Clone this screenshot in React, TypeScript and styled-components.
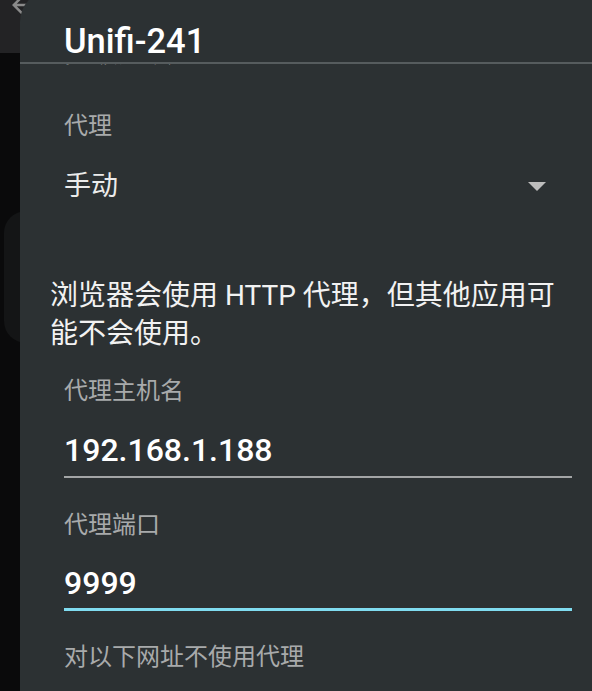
import React from "react";
import styled, { createGlobalStyle } from "styled-components";

const Global = createGlobalStyle`
  html, body {
    margin: 0;
    padding: 0;
    background: #0a0a0b;
    overflow: hidden;
  }
  * { box-sizing: border-box; }
`;

const FONT = `Roboto, "Noto Sans CJK SC", sans-serif`;

const Screen = styled.div`
  position: relative;
  width: 592px;
  height: 691px;
  overflow: hidden;
  background: #0a0a0b;
  font-family: ${FONT};
`;

const AppBar = styled.div`
  height: 53px;
  background: #232325;
  display: flex;
  align-items: flex-start;
  padding-left: 7px;
`;

const BackIcon = styled.svg`
  width: 30px;
  height: 30px;
  margin-top: -10px;
  fill: #8a8a8a;
`;

const ListArea = styled.div`
  padding: 158px 0 0 4px;
`;

const ListCard = styled.div`
  width: 200px;
  height: 132px;
  border-radius: 22px;
  background: #141516;
`;

const Dialog = styled.div`
  position: absolute;
  left: 20px;
  top: -10px;
  right: 0;
  bottom: 0;
  background: #2c3133;
  border-top-left-radius: 32px;
  display: flex;
  flex-direction: column;
`;

const Header = styled.div`
  height: 72px;
  flex-shrink: 0;
  display: flex;
  align-items: flex-end;
  padding: 0 0 1px 44px;
`;

const Title = styled.h1`
  margin: 0;
  font-size: 34.5px;
  line-height: 40px;
  font-weight: 500;
  color: #ffffff;
  letter-spacing: 0;
`;

const Divider = styled.div`
  height: 2px;
  flex-shrink: 0;
  background: #565c5e;
`;

const Body = styled.div`
  flex: 1;
  min-height: 0;
  overflow: hidden;
  padding: 0 20px 0 30px;
`;

const Scroller = styled.div`
  margin-top: -31px;
  display: flex;
  flex-direction: column;
`;

const CheckRow = styled.div`
  padding-left: 14px;
  font-size: 27px;
  line-height: 40px;
  color: #f2f2f2;
`;

const FieldLabel = styled.div<{ $top: number }>`
  margin-top: ${(p) => p.$top}px;
  padding-left: 14px;
  font-size: 24px;
  line-height: 32px;
  color: #a8aaab;
`;

const SelectRow = styled.div`
  margin-top: 16px;
  height: 56px;
  display: flex;
  align-items: center;
  justify-content: space-between;
  padding-left: 14px;
`;

const SelectValue = styled.span`
  font-size: 27px;
  line-height: 40px;
  color: #ebebeb;
`;

const Caret = styled.svg`
  width: 18px;
  height: 9px;
  margin-right: 26px;
  fill: #bdbdbd;
`;

const Note = styled.p`
  margin: 63px 0 0 0;
  font-size: 28px;
  line-height: 38px;
  color: #f2f2f2;
`;

const TextField = styled.div<{ $focused?: boolean }>`
  margin: ${(p) => (p.$focused ? 22 : 23)}px 0 0 14px;
  padding-bottom: ${(p) => (p.$focused ? 5 : 6)}px;
  border-bottom: ${(p) => (p.$focused ? "3px solid #80dcf0" : "2px solid #a3a5a6")};
  font-size: 32px;
  line-height: 40px;
  font-weight: 500;
  color: #ffffff;
`;

export default function App() {
  return (
    <>
      <Global />
      <Screen>
        <AppBar>
          <BackIcon viewBox="0 0 24 24">
            <path d="M20 11H7.83l5.59-5.59L12 4l-8 8 8 8 1.41-1.41L7.83 13H20v-2z" />
          </BackIcon>
        </AppBar>
        <ListArea>
          <ListCard />
        </ListArea>
        <Dialog>
          <Header>
            <Title>Unifi-241</Title>
          </Header>
          <Divider />
          <Body>
            <Scroller>
              <CheckRow>高级选项</CheckRow>
              <FieldLabel $top={37}>代理</FieldLabel>
              <SelectRow>
                <SelectValue>手动</SelectValue>
                <Caret viewBox="0 0 18 9">
                  <polygon points="0,0 18,0 9,9" />
                </Caret>
              </SelectRow>
              <Note>浏览器会使用 HTTP 代理，但其他应用可能不会使用。</Note>
              <FieldLabel $top={22}>代理主机名</FieldLabel>
              <TextField>192.168.1.188</TextField>
              <FieldLabel $top={31}>代理端口</FieldLabel>
              <TextField $focused>9999</TextField>
              <FieldLabel $top={30}>对以下网址不使用代理</FieldLabel>
            </Scroller>
          </Body>
        </Dialog>
      </Screen>
    </>
  );
}
